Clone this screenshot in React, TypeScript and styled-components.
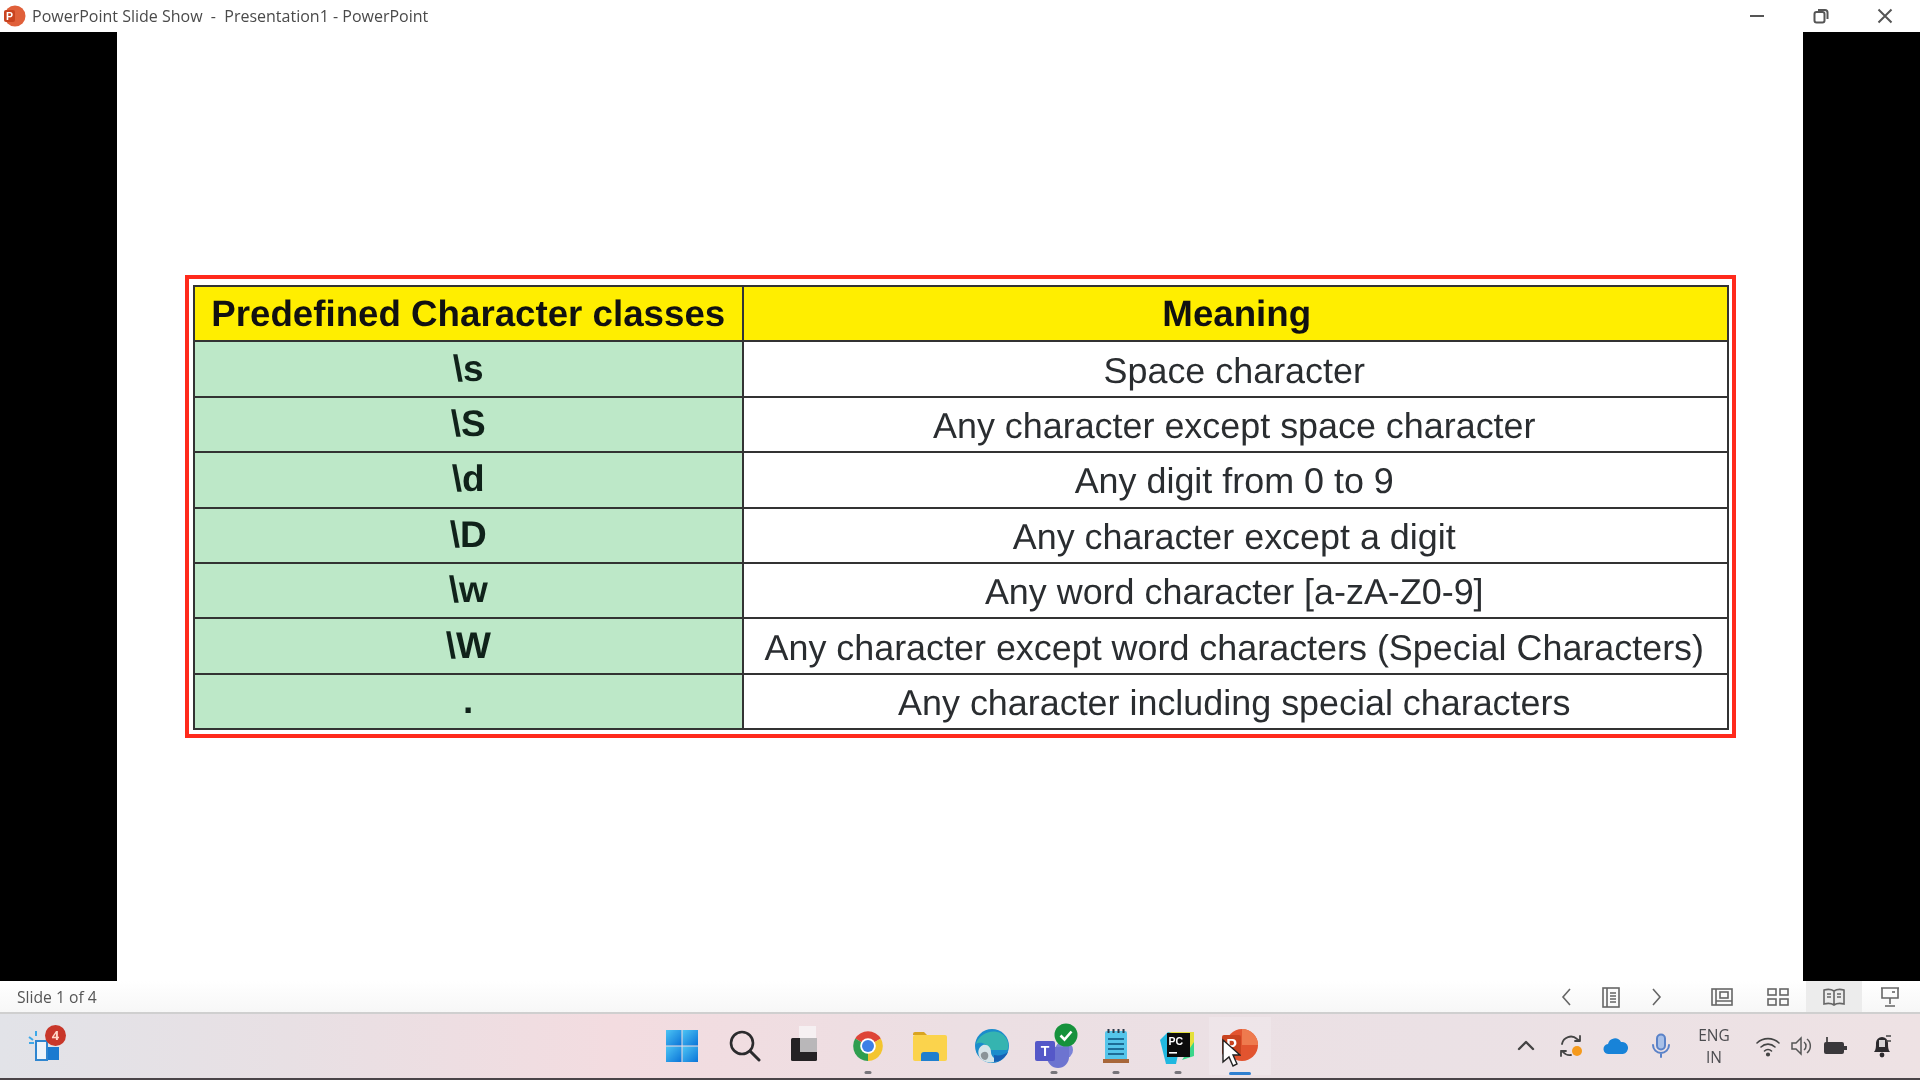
import styled, { createGlobalStyle } from "styled-components";

const GlobalStyle = createGlobalStyle`
    html, body {
        margin: 0;
        padding: 0;
        background: #000;
        overflow: hidden;
    }
`

const Screen = styled.div`
    width: 1920px;
    height: 1080px;
    display: flex;
    flex-direction: column;
    overflow: hidden;
    filter: blur(0.55px);
    font-family: 'Open Sans', 'Noto Sans', sans-serif;
`

const TitleBar = styled.div`
    height: 32px;
    flex: none;
    display: flex;
    align-items: center;
    background: #ffffff;
    padding-left: 2px;
    padding-right: 3px;
`

const TitleText = styled.span`
    margin-left: 6px;
    font-size: 16px;
    color: #4a4a4a;
    white-space: pre;
`

const WindowButtons = styled.div`
    margin-left: auto;
    display: flex;
`

const WindowButton = styled.div`
    width: 64px;
    height: 30px;
    display: grid;
    place-items: center;
`

const Stage = styled.div`
    flex: 1;
    display: grid;
    grid-template-columns: 117px 1fr 117px;
    background: #000;
`

const Slide = styled.div`
    background: #ffffff;
    padding: 243px 67px 0 68px;
`

const RedFrame = styled.div`
    border: 4px solid #ff2a1c;
    padding: 6px 3px 4px 4px;
`

const CharTable = styled.table`
    width: 100%;
    table-layout: fixed;
    border-collapse: collapse;
    font-family: 'Liberation Sans', Arial, sans-serif;
    text-rendering: geometricPrecision;
    color: #16181a;
    border: 2px solid #333;
`

const Row = styled.tr`
    height: 55.4px;
`

const HeadCell = styled.th<{ $width?: number; $shift?: number }>`
    width: ${p => (p.$width ? `${p.$width}px` : "auto")};
    padding: 0 0 0 ${p => p.$shift ?? 0}px;
    background: #ffee00;
    border: 2px solid #333;
    font-size: 36.7px;
    font-weight: 700;
    color: #111;
`

const KeyCell = styled.td`
    padding: 0 0 1px;
    background: #bde8c8;
    border: 2px solid #333;
    text-align: center;
    font-size: 37px;
    font-weight: 700;
    color: #10221a;
`

const MeanCell = styled.td`
    padding: 4px 2px 0 0;
    background: #ffffff;
    border: 2px solid #333;
    text-align: center;
    font-size: 35.9px;
    color: #2a2d30;
    white-space: nowrap;
`

const StatusBar = styled.div`
    height: 31px;
    flex: none;
    display: flex;
    align-items: center;
    background: linear-gradient(#ffffff, #f7f7f7);
    border-bottom: 2px solid #cfcfcf;
    padding-left: 17px;
    padding-right: 2px;
`

const SlideCount = styled.span`
    font-size: 15.7px;
    color: #555;
`

const StatusIcons = styled.div`
    margin-left: auto;
    display: flex;
    align-items: center;
`

const StatusCell = styled.div<{ $width: number; $active?: boolean; $gap?: number }>`
    width: ${p => p.$width}px;
    height: 31px;
    margin-left: ${p => p.$gap ?? 0}px;
    display: grid;
    place-items: center;
    background: ${p => (p.$active ? "#ececec" : "transparent")};
`

const Taskbar = styled.div`
    height: 64px;
    flex: none;
    display: grid;
    grid-template-columns: 1fr auto 1fr;
    align-items: center;
    background: linear-gradient(90deg, #e2e3e8 0%, #e8e0e4 15%, #f3dce0 32%, #ecdfe3 50%, #ebe1e5 75%, #eee2e4 100%);
    border-bottom: 2px solid #4a4448;
`

const WidgetArea = styled.div`
    position: relative;
    width: 32px;
    height: 34px;
    margin: 0 0 3px 28px;
`

const Badge = styled.span`
    position: absolute;
    top: -3px;
    right: -6px;
    width: 21px;
    height: 21px;
    border-radius: 50%;
    background: #c8372a;
    color: #ffd9c8;
    font-size: 13px;
    font-weight: 700;
    display: grid;
    place-items: center;
`

const CenterIcons = styled.div`
    display: flex;
    align-items: center;
    margin-left: 2px;
`

const TaskButton = styled.div<{ $bar?: "gray" | "blue"; $active?: boolean }>`
    position: relative;
    width: 62px;
    height: 58px;
    display: grid;
    place-items: center;
    background: ${p => (p.$active ? "rgba(255,255,255,0.18)" : "transparent")};

    &::after {
        content: "";
        display: ${p => (p.$bar ? "block" : "none")};
        position: absolute;
        bottom: ${p => (p.$bar === "blue" ? "0px" : "1px")};
        left: 50%;
        transform: translateX(-50%);
        width: ${p => (p.$bar === "blue" ? "22px" : "7px")};
        height: 3px;
        border-radius: 2px;
        background: ${p => (p.$bar === "blue" ? "#2f7fd0" : "#77747a")};
    }
`

const Tray = styled.div`
    display: flex;
    align-items: center;
    justify-content: flex-end;
    padding-right: 17px;
`

const TrayCell = styled.div<{ $width: number }>`
    width: ${p => p.$width}px;
    display: grid;
    place-items: center;
`

const Lang = styled.div`
    font-size: 15.5px;
    line-height: 22px;
    text-align: center;
    color: #4c4c50;
`

const Cursor = styled.svg`
    position: absolute;
    left: 12px;
    top: 21px;
`

const PptSmall = () => (
    <svg width="24" height="24" viewBox="0 0 24 24">
        <circle cx="13" cy="12" r="10.5" fill="#e0603a" />
        <rect x="2" y="6" width="11" height="12" rx="2" fill="#c9431f" />
        <text x="7.5" y="16" fontSize="10.5" fontWeight="700" fill="#ffffff" textAnchor="middle" fontFamily="Liberation Sans">P</text>
    </svg>
)

const WindowsLogo = () => (
    <svg width="34" height="34" viewBox="0 0 34 34">
        <defs>
            <linearGradient id="win" x1="0" y1="0" x2="1" y2="1">
                <stop offset="0" stopColor="#4cc4f4" />
                <stop offset="1" stopColor="#0b74d8" />
            </linearGradient>
        </defs>
        <rect x="1" y="1" width="15.5" height="15.5" fill="url(#win)" />
        <rect x="17.5" y="1" width="15.5" height="15.5" fill="url(#win)" />
        <rect x="1" y="17.5" width="15.5" height="15.5" fill="url(#win)" />
        <rect x="17.5" y="17.5" width="15.5" height="15.5" fill="url(#win)" />
    </svg>
)

const SearchIcon = () => (
    <svg width="34" height="34" viewBox="0 0 34 34" fill="none" stroke="#2b2b2d" strokeLinecap="round">
        <circle cx="15" cy="14" r="11" strokeWidth="2.6" />
        <path d="M23 22l9 9" strokeWidth="3" />
    </svg>
)

const TaskViewIcon = () => (
    <svg width="32" height="40" viewBox="0 0 32 40">
        <rect x="9" y="0" width="17" height="16" fill="#f6f0f2" />
        <rect x="1" y="12" width="26" height="23" rx="1.5" fill="#242224" />
        <rect x="10" y="12" width="17" height="14" fill="#b9b7b9" />
    </svg>
)

const ChromeIcon = () => (
    <svg width="34" height="34" viewBox="0 0 34 34">
        <path d="M17 17L4.2 9.5A15 15 0 0 1 29.8 9.5Z" fill="#de4437" />
        <path d="M17 17L29.8 9.5A15 15 0 0 1 17 32Z" fill="#f3c52f" />
        <path d="M17 17L17 32A15 15 0 0 1 4.2 9.5Z" fill="#2f9e4f" />
        <circle cx="17" cy="17" r="7.8" fill="#ffffff" />
        <circle cx="17" cy="17" r="6" fill="#3d7fe6" />
    </svg>
)

const FolderIcon = () => (
    <svg width="36" height="32" viewBox="0 0 36 32">
        <path d="M1 4a2 2 0 0 1 2-2h9l3 3h-14z" fill="#d9a420" />
        <rect x="1" y="5" width="34" height="26" rx="2" fill="#fbd34c" />
        <path d="M9 31v-6a3 3 0 0 1 3-3h12a3 3 0 0 1 3 3v6z" fill="#1f7fcf" />
    </svg>
)

const EdgeIcon = () => (
    <svg width="36" height="36" viewBox="0 0 36 36">
        <circle cx="18" cy="18" r="17" fill="#1b8ccc" />
        <path d="M2 16C5 4 24 -2 32 10c3 5 3 10 1 12H15c-2-7-9-9-13-6z" fill="#35b4b0" />
        <path d="M6 30c-3-5-2-11 3-13 5-1 8 3 8 7 0 4 3 7 8 8-6 4-15 3-19-2z" fill="#d6e4e8" />
        <path d="M7 26c2-3 6-3 7 0s-1 6-3 6-5-3-4-6z" fill="#8a9498" />
        <path d="M20 34c6 0 11-4 14-10-4 3-9 4-14 3z" fill="#1660b4" />
    </svg>
)

const TeamsIcon = () => (
    <svg width="48" height="46" viewBox="0 0 48 46">
        <circle cx="34" cy="27" r="9" fill="#7b83d8" />
        <path d="M17 24h22v10a11 11 0 0 1-22 0z" fill="#6d74d0" />
        <rect x="5" y="18" width="20" height="20" rx="2" fill="#5558c8" />
        <text x="15" y="33" fontSize="14" fontWeight="700" fill="#ffffff" textAnchor="middle" fontFamily="Liberation Sans">T</text>
        <circle cx="36" cy="12" r="11.5" fill="#16923c" />
        <path d="M30.5 12.5l4 4 7-8" fill="none" stroke="#ffffff" strokeWidth="2.6" />
    </svg>
)

const NotepadIcon = () => (
    <svg width="26" height="36" viewBox="0 0 26 36">
        <rect x="2" y="3" width="22" height="31" rx="2" fill="#55c5ea" />
        <rect x="0" y="31" width="26" height="4" fill="#a8673a" />
        <path d="M5 11h16M5 16h16M5 21h16M5 26h16" stroke="#1d6c96" strokeWidth="1.8" />
        <path d="M5.5 1v4M10.5 1v4M15.5 1v4M20.5 1v4" stroke="#2a3a4a" strokeWidth="2" />
    </svg>
)

const PyCharmIcon = () => (
    <svg width="36" height="36" viewBox="0 0 36 36">
        <path d="M8 4h26v24z" fill="#e4e03a" />
        <path d="M0 12l8-8 14 4-6 28H6z" fill="#20b8e0" />
        <path d="M22 32l12-4v-14z" fill="#3bd68a" />
        <rect x="7" y="5" width="23" height="24" fill="#0b0b0b" />
        <text x="8.5" y="17" fontSize="10.5" fontWeight="700" fill="#ffffff" fontFamily="Liberation Sans">PC</text>
        <rect x="9" y="24" width="8" height="1.6" fill="#ffffff" />
    </svg>
)

const PptBig = () => (
    <svg width="38" height="36" viewBox="0 0 38 36">
        <circle cx="21" cy="17" r="16" fill="#e2542f" />
        <path d="M21 1a16 16 0 0 1 16 16H21z" fill="#ee7a4e" />
        <rect x="1" y="7" width="19" height="20" rx="2" fill="#c9431f" />
        <text x="10.5" y="23" fontSize="16" fontWeight="700" fill="#ffffff" textAnchor="middle" fontFamily="Liberation Sans">P</text>
    </svg>
)

const StatusGlyph = ({ children, width = 22, height = 22 }: { children: React.ReactNode; width?: number; height?: number }) => (
    <svg width={width} height={height} viewBox={`0 0 ${width} ${height}`} fill="none" stroke="#666" strokeWidth="1.6">
        {children}
    </svg>
)

const TrayGlyph = ({ children, size = 26 }: { children: React.ReactNode; size?: number }) => (
    <svg width={size} height={size} viewBox="0 0 26 26" fill="none" stroke="#444" strokeWidth="1.8" strokeLinecap="round" strokeLinejoin="round">
        {children}
    </svg>
)

const rows = [
    ["\\s", "Space character"],
    ["\\S", "Any character except space character"],
    ["\\d", "Any digit from 0 to 9"],
    ["\\D", "Any character except a digit"],
    ["\\w", "Any word character [a-zA-Z0-9]"],
    ["\\W", "Any character except word characters (Special Characters)"],
    [".", "Any character including special characters"],
];

const App = () => {
    return (
        <Screen>
            <GlobalStyle />
            <TitleBar>
                <PptSmall />
                <TitleText>{"PowerPoint Slide Show  -  Presentation1 - PowerPoint"}</TitleText>
                <WindowButtons>
                    <WindowButton>
                        <svg width="16" height="16" fill="none" stroke="#555" strokeWidth="2"><path d="M1 8h14" /></svg>
                    </WindowButton>
                    <WindowButton>
                        <svg width="16" height="16" fill="none" stroke="#555" strokeWidth="2">
                            <rect x="1.5" y="4" width="10" height="10.5" rx="2" />
                            <path d="M5 2h7a2.5 2.5 0 0 1 2.5 2.5V11" />
                        </svg>
                    </WindowButton>
                    <WindowButton>
                        <svg width="16" height="16" fill="none" stroke="#555" strokeWidth="2"><path d="M1.5 1.5l13 13M14.5 1.5l-13 13" /></svg>
                    </WindowButton>
                </WindowButtons>
            </TitleBar>

            <Stage>
                <div />
                <Slide>
                    <RedFrame>
                        <CharTable>
                            <thead>
                                <Row>
                                    <HeadCell $width={546.5}>Predefined Character classes</HeadCell>
                                    <HeadCell $shift={3}>Meaning</HeadCell>
                                </Row>
                            </thead>
                            <tbody>
                                {rows.map(([key, meaning]) => (
                                    <Row key={key}>
                                        <KeyCell>{key}</KeyCell>
                                        <MeanCell>{meaning}</MeanCell>
                                    </Row>
                                ))}
                            </tbody>
                        </CharTable>
                    </RedFrame>
                </Slide>
                <div />
            </Stage>

            <StatusBar>
                <SlideCount>Slide 1 of 4</SlideCount>
                <StatusIcons>
                    <StatusCell $width={44.5}>
                        <StatusGlyph><path d="M14 3l-7 8 7 8" /></StatusGlyph>
                    </StatusCell>
                    <StatusCell $width={44.5}>
                        <StatusGlyph>
                            <rect x="3" y="2" width="16" height="19" />
                            <path d="M7 2v19M10 7h6M10 10h6M10 13h6M10 16h6" />
                        </StatusGlyph>
                    </StatusCell>
                    <StatusCell $width={44.5}>
                        <StatusGlyph><path d="M8 3l7 8-7 8" /></StatusGlyph>
                    </StatusCell>
                    <StatusCell $width={56} $gap={16}>
                        <StatusGlyph width={22} height={20}>
                            <rect x="1" y="2" width="20" height="16" />
                            <path d="M5 2v16M5 14h16" />
                            <rect x="9" y="5" width="8" height="6" />
                        </StatusGlyph>
                    </StatusCell>
                    <StatusCell $width={56}>
                        <StatusGlyph width={22} height={20}>
                            <rect x="1" y="2" width="8" height="6" />
                            <rect x="13" y="2" width="8" height="6" />
                            <rect x="1" y="12" width="8" height="6" />
                            <rect x="13" y="12" width="8" height="6" />
                        </StatusGlyph>
                    </StatusCell>
                    <StatusCell $width={56} $active>
                        <StatusGlyph width={22} height={20}>
                            <path d="M11 4C8 2 5 2 1 3v14c4-1 7-1 10 1 3-2 6-2 10-1V3c-4-1-7-1-10 1zM11 4v14M4 7h4M4 10h4M14 7h4M14 10h4" />
                        </StatusGlyph>
                    </StatusCell>
                    <StatusCell $width={56}>
                        <StatusGlyph>
                            <path d="M2 2h18M3 2v10h16V2M11 12v6M6 20h10" />
                            <path d="M13 6h3" />
                        </StatusGlyph>
                    </StatusCell>
                </StatusIcons>
            </StatusBar>

            <Taskbar>
                <WidgetArea>
                    <svg width="32" height="34" viewBox="0 0 32 34">
                        <path d="M1 9l4 3M8 3v5M1 15h5" stroke="#3ea8e8" strokeWidth="2" />
                        <rect x="8" y="13" width="11" height="19" fill="#eef4fa" stroke="#2f86d0" strokeWidth="2" />
                        <rect x="20" y="19" width="11" height="13" fill="#1a7ad0" />
                    </svg>
                    <Badge>4</Badge>
                </WidgetArea>

                <CenterIcons>
                    <TaskButton><WindowsLogo /></TaskButton>
                    <TaskButton><SearchIcon /></TaskButton>
                    <TaskButton><TaskViewIcon /></TaskButton>
                    <TaskButton $bar="gray"><ChromeIcon /></TaskButton>
                    <TaskButton><FolderIcon /></TaskButton>
                    <TaskButton><EdgeIcon /></TaskButton>
                    <TaskButton $bar="gray"><TeamsIcon /></TaskButton>
                    <TaskButton $bar="gray"><NotepadIcon /></TaskButton>
                    <TaskButton $bar="gray"><PyCharmIcon /></TaskButton>
                    <TaskButton $bar="blue" $active>
                        <PptBig />
                        <Cursor width="20" height="30" viewBox="0 0 20 30">
                            <path d="M2 2v22l6-5 4 9 4-2-4-9h7z" fill="#ffffff" stroke="#222" strokeWidth="1.4" />
                        </Cursor>
                    </TaskButton>
                </CenterIcons>

                <Tray>
                    <TrayCell $width={45}>
                        <TrayGlyph><path d="M6 16l7-7 7 7" strokeWidth="2.4" /></TrayGlyph>
                    </TrayCell>
                    <TrayCell $width={45}>
                        <TrayGlyph>
                            <path d="M4 11a9 9 0 0 1 15-5l3 2M22 3v5h-5" />
                            <path d="M13 22a9 9 0 0 1-8-3l-2-1M3 23v-5h5" />
                            <circle cx="19" cy="18" r="5" fill="#f59a1c" stroke="none" />
                        </TrayGlyph>
                    </TrayCell>
                    <TrayCell $width={45}>
                        <svg width="26" height="18" viewBox="0 0 26 18">
                            <path d="M6 17a5 5 0 0 1-1-10 7 7 0 0 1 13-2 6 6 0 0 1 2 12z" fill="#1883d8" />
                        </svg>
                    </TrayCell>
                    <TrayCell $width={45}>
                        <svg width="22" height="26" viewBox="0 0 22 26" fill="none" stroke="#5a82c8" strokeWidth="2" strokeLinecap="round">
                            <rect x="7" y="1.5" width="8" height="15" rx="4" fill="#a8c0e8" />
                            <path d="M3 12a8 8 0 0 0 16 0M11 20v4" />
                        </svg>
                    </TrayCell>
                    <TrayCell $width={62}>
                        <Lang>ENG<br />IN</Lang>
                    </TrayCell>
                    <TrayCell $width={46}>
                        <TrayGlyph>
                            <path d="M2 10a16 16 0 0 1 22 0M6 14a10 10 0 0 1 14 0M9.5 18a5 5 0 0 1 7 0" strokeWidth="1.6" />
                            <circle cx="13" cy="21.5" r="1.2" fill="#444" />
                        </TrayGlyph>
                    </TrayCell>
                    <TrayCell $width={18}>
                        <svg width="22" height="20" viewBox="0 0 22 20" fill="none" stroke="#555" strokeWidth="1.5">
                            <path d="M1 7h4l5-5v16l-5-5H1zM13 6a5 5 0 0 1 0 8M16 3a9 9 0 0 1 0 14" />
                        </svg>
                    </TrayCell>
                    <TrayCell $width={52}>
                        <svg width="24" height="20" viewBox="0 0 24 20">
                            <path d="M4 1v6l3 0" fill="none" stroke="#333" strokeWidth="1.6" />
                            <rect x="1" y="6" width="20" height="12" rx="2" fill="#3a383b" />
                            <rect x="21" y="10" width="3" height="4" fill="#3a383b" />
                        </svg>
                    </TrayCell>
                    <TrayCell $width={42}>
                        <svg width="22" height="26" viewBox="0 0 22 26">
                            <path d="M3 19c2-2 2-6 2-9a6 6 0 0 1 12 0c0 3 0 7 2 9z" fill="#2c2a2d" />
                            <circle cx="11" cy="22" r="2.4" fill="#2c2a2d" />
                            <rect x="8" y="7" width="6" height="7" fill="#d8d4d6" />
                            <path d="M15 3h5M15 8h5" stroke="#444" strokeWidth="1.6" />
                        </svg>
                    </TrayCell>
                </Tray>
            </Taskbar>
        </Screen>
    );
}

export default App;
